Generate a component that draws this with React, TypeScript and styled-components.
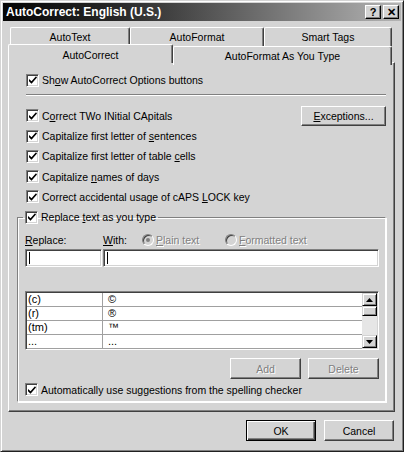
import React from "react";
import styled, { createGlobalStyle } from "styled-components";

const FACE = "#d4d4d4";
const SHADOW = "#808080";
const DARK = "#404040";

const GlobalStyle = createGlobalStyle`
  html, body { margin: 0; padding: 0; background: ${FACE}; }
  body {
    font-family: "Liberation Sans", Arial, sans-serif;
    font-size: 10.5px;
    color: #000;
  }
  * { box-sizing: border-box; }
`;

const Window = styled.div`
  width: 404px;
  height: 452px;
  background: ${FACE};
  border: 1px solid;
  border-color: ${FACE} #202020 #202020 ${FACE};
  box-shadow: inset 1px 1px 0 #fff, inset -1px -1px 0 ${SHADOW};
  padding: 2px;
  display: flex;
  flex-direction: column;
`;

const TitleBar = styled.div`
  height: 18px;
  display: flex;
  align-items: center;
  padding: 0 2px 0 3px;
  background: linear-gradient(to right, #050505 0%, #2a2a2a 30%, #b4b4b4 100%);
  color: #fff;
  font-weight: bold;
  font-size: 12px;
`;

const TitleText = styled.div`
  flex: 1;
`;

const TitleButton = styled.div`
  width: 16px;
  height: 14px;
  margin-left: 2px;
  background: ${FACE};
  border: 1px solid;
  border-color: #fff #000 #000 #fff;
  box-shadow: inset -1px -1px 0 ${SHADOW};
  color: #000;
  display: flex;
  align-items: center;
  justify-content: center;
  font-size: 11px;
  font-weight: bold;
  line-height: 1;
`;

const Body = styled.div`
  flex: 1;
  display: flex;
  flex-direction: column;
  padding: 6px 6px 0 5px;
`;

const TabStrip = styled.div`
  display: flex;
  flex-direction: column;
`;

const TabRow = styled.div<{ $back?: boolean }>`
  display: flex;
  height: ${(p) => (p.$back ? 19 : 16)}px;
  margin-left: ${(p) => (p.$back ? 2 : 0)}px;
  align-items: flex-start;
`;

const Tab = styled.div<{ $w: number; $selected?: boolean }>`
  width: ${(p) => p.$w}px;
  height: 19px;
  margin-top: ${(p) => (p.$selected ? -2 : 0)}px;
  background: ${FACE};
  border-top: 1px solid #fff;
  border-left: 1px solid #fff;
  border-right: 1px solid ${DARK};
  box-shadow: inset -1px 0 0 ${SHADOW};
  border-radius: 2px 2px 0 0;
  text-align: center;
  padding-top: ${(p) => (p.$selected ? 4 : 3)}px;
  position: relative;
  z-index: ${(p) => (p.$selected ? 2 : 0)};
`;

const Panel = styled.div`
  height: 350px;
  border: 1px solid;
  border-color: #fff ${DARK} ${DARK} #fff;
  box-shadow: inset -1px -1px 0 ${SHADOW};
  padding: 7px 8px 0 8px;
  display: flex;
  flex-direction: column;
`;

const Row = styled.div<{ $h?: number; $flush?: boolean }>`
  height: ${(p) => p.$h ?? 20.25}px;
  display: flex;
  align-items: center;
  padding-left: ${(p) => (p.$flush ? 0 : 9)}px;
`;

const Label = styled.span<{ $disabled?: boolean }>`
  white-space: nowrap;
  color: ${(p) => (p.$disabled ? SHADOW : "#000")};
  text-shadow: ${(p) => (p.$disabled ? "1px 1px 0 #fff" : "none")};
`;

const Box = styled.div`
  width: 13px;
  height: 13px;
  flex: none;
  margin-right: 3px;
  background: #fff;
  border: 1px solid;
  border-color: ${SHADOW} #fff #fff ${SHADOW};
  box-shadow: inset 1px 1px 0 ${DARK}, inset -1px -1px 0 ${FACE};
  display: flex;
  align-items: center;
  justify-content: center;
`;

const Separator = styled.div`
  margin: 4px 0 9px 9px;
  height: 2px;
  border-top: 1px solid ${SHADOW};
  border-bottom: 1px solid #fff;
`;

const Button = styled.div<{ $w: number; $h?: number; $default?: boolean; $disabled?: boolean }>`
  width: ${(p) => p.$w}px;
  height: ${(p) => p.$h ?? 20}px;
  flex: none;
  display: flex;
  align-items: center;
  justify-content: center;
  background: ${FACE};
  border: 1px solid;
  border-color: ${(p) => (p.$default ? "#000" : `#fff ${DARK} ${DARK} #fff`)};
  box-shadow: ${(p) =>
    p.$default
      ? `inset 1px 1px 0 #fff, inset -1px -1px 0 ${DARK}, inset -2px -2px 0 ${SHADOW}`
      : `inset -1px -1px 0 ${SHADOW}`};
  color: ${(p) => (p.$disabled ? SHADOW : "#000")};
  text-shadow: ${(p) => (p.$disabled ? "1px 1px 0 #fff" : "none")};
`;

const Spacer = styled.div`
  flex: 1;
`;

const Group = styled.fieldset`
  margin: 0;
  padding: 0 6px 1px 5px;
  border: 1px solid;
  border-color: ${SHADOW} #fff #fff ${SHADOW};
  box-shadow: 1px 1px 0 #fff, inset 1px 1px 0 #fff;
  min-width: 0;
`;

const Legend = styled.legend`
  padding: 0 2px;
  height: 20px;
  display: flex;
  align-items: center;
`;

const GroupInner = styled.div`
  padding-left: 2px;
  display: flex;
  flex-direction: column;
`;

const FieldLabels = styled.div`
  margin-top: 5px;
  height: 16px;
  display: grid;
  grid-template-columns: 78px 39px 83px 1fr;
  align-items: center;
`;

const RadioItem = styled.div`
  display: flex;
  align-items: center;
`;

const RadioCircle = styled.div<{ $on?: boolean }>`
  width: 12px;
  height: 12px;
  margin-right: 2px;
  border-radius: 50%;
  border: 1px solid;
  border-color: ${SHADOW} #fff #fff ${SHADOW};
  box-shadow: inset 1px 1px 0 ${DARK};
  background: ${FACE};
  display: flex;
  align-items: center;
  justify-content: center;
  &::after {
    content: "";
    width: 4px;
    height: 4px;
    border-radius: 50%;
    background: ${(p) => (p.$on ? SHADOW : "transparent")};
  }
`;

const InputRow = styled.div`
  margin-top: 1px;
  display: flex;
  gap: 1px;
`;

const TextInput = styled.div<{ $w?: number }>`
  height: 18px;
  ${(p) => (p.$w ? `width: ${p.$w}px;` : "flex: 1;")}
  background: #fff;
  border: 1px solid;
  border-color: ${SHADOW} #fff #fff ${SHADOW};
  box-shadow: inset 1px 1px 0 ${DARK}, inset -1px -1px 0 ${FACE};
  padding: 2px 0 0 3px;
`;

const Caret = styled.div`
  width: 1px;
  height: 12px;
  background: #000;
`;

const ListBox = styled.div`
  margin-top: 24px;
  height: 59px;
  background: #fff;
  border: 1px solid;
  border-color: ${SHADOW} #fff #fff ${SHADOW};
  box-shadow: inset 1px 1px 0 ${DARK}, inset -1px -1px 0 ${FACE};
  padding: 1px;
  display: flex;
  overflow: hidden;
`;

const ListRows = styled.div`
  flex: 1;
  display: flex;
  flex-direction: column;
`;

const ListRow = styled.div`
  height: 14px;
  flex: none;
  display: grid;
  grid-template-columns: 76px 1fr;
  border-bottom: 1px solid #a0a0a0;
  line-height: 13px;
  font-size: 11px;
`;

const Cell = styled.div<{ $first?: boolean }>`
  padding-left: ${(p) => (p.$first ? 1 : 5)}px;
  border-right: ${(p) => (p.$first ? "1px solid #a0a0a0" : "none")};
  white-space: nowrap;
`;

const ScrollBar = styled.div`
  width: 15px;
  flex: none;
  display: flex;
  flex-direction: column;
  background: #e6e6e6;
`;

const ScrollButton = styled.div<{ $h?: number }>`
  height: ${(p) => p.$h ?? 13}px;
  flex: none;
  background: ${FACE};
  border: 1px solid;
  border-color: ${FACE} #000 #000 ${FACE};
  box-shadow: inset 1px 1px 0 #fff, inset -1px -1px 0 ${SHADOW};
  display: flex;
  align-items: center;
  justify-content: center;
`;

const ButtonRow = styled.div`
  margin-top: 8px;
  display: flex;
  justify-content: flex-end;
  gap: 7px;
`;

const Footer = styled.div`
  margin-top: 8px;
  display: flex;
  justify-content: flex-end;
  gap: 8px;
  padding-right: 1px;
`;

const Check = () => (
  <svg width="8" height="8" viewBox="0 0 8 8">
    <polygon points="0,3 2.5,5.2 7,0.3 8,1.5 2.5,7.8 0,5.3" fill="#000" />
  </svg>
);

const Arrow = ({ down }: { down?: boolean }) => (
  <svg width="7" height="4" viewBox="0 0 7 4">
    <polygon points={down ? "0,0 7,0 3.5,4" : "0,4 7,4 3.5,0"} fill="#000" />
  </svg>
);

const CheckRow = ({ children, h }: { children: React.ReactNode; h?: number }) => (
  <Row $h={h}>
    <Box>
      <Check />
    </Box>
    <Label>{children}</Label>
  </Row>
);

const entries: [string, string][] = [
  ["(c)", "©"],
  ["(r)", "®"],
  ["(tm)", "™"],
  ["...", "..."],
];

export default function App() {
  return (
    <>
      <GlobalStyle />
      <Window>
        <TitleBar>
          <TitleText>AutoCorrect: English (U.S.)</TitleText>
          <TitleButton>?</TitleButton>
          <TitleButton>✕</TitleButton>
        </TitleBar>
        <Body>
          <TabStrip>
            <TabRow $back>
              <Tab $w={120}>AutoText</Tab>
              <Tab $w={134}>AutoFormat</Tab>
              <Tab $w={128}>Smart Tags</Tab>
            </TabRow>
            <TabRow>
              <Tab $w={165} $selected>
                AutoCorrect
              </Tab>
              <Tab $w={219}>AutoFormat As You Type</Tab>
            </TabRow>
          </TabStrip>
          <Panel>
            <CheckRow h={20}>
              Sh<u>o</u>w AutoCorrect Options buttons
            </CheckRow>
            <Separator />
            <Row $h={21}>
              <Box>
                <Check />
              </Box>
              <Label>
                C<u>o</u>rrect TWo INitial CApitals
              </Label>
              <Spacer />
              <Button $w={85}>
                <u>E</u>xceptions...
              </Button>
            </Row>
            <CheckRow>
              Capitalize first letter of <u>s</u>entences
            </CheckRow>
            <CheckRow>
              Capitalize first letter of table <u>c</u>ells
            </CheckRow>
            <CheckRow>
              Capitalize <u>n</u>ames of days
            </CheckRow>
            <CheckRow>
              Correct accidental usage of cAPS <u>L</u>OCK key
            </CheckRow>
            <Group>
              <Legend>
                <Box>
                  <Check />
                </Box>
                <Label>
                  Replace <u>t</u>ext as you type
                </Label>
              </Legend>
              <GroupInner>
                <FieldLabels>
                  <Label>
                    <u>R</u>eplace:
                  </Label>
                  <Label>
                    <u>W</u>ith:
                  </Label>
                  <RadioItem>
                    <RadioCircle $on />
                    <Label $disabled>
                      <u>P</u>lain text
                    </Label>
                  </RadioItem>
                  <RadioItem>
                    <RadioCircle />
                    <Label $disabled>
                      <u>F</u>ormatted text
                    </Label>
                  </RadioItem>
                </FieldLabels>
                <InputRow>
                  <TextInput $w={77}>
                    <Caret />
                  </TextInput>
                  <TextInput>
                    <Caret />
                  </TextInput>
                </InputRow>
                <ListBox>
                  <ListRows>
                    {entries.map(([from, to]) => (
                      <ListRow key={from}>
                        <Cell $first>{from}</Cell>
                        <Cell>{to}</Cell>
                      </ListRow>
                    ))}
                  </ListRows>
                  <ScrollBar>
                    <ScrollButton>
                      <Arrow />
                    </ScrollButton>
                    <ScrollButton $h={10} />
                    <Spacer />
                    <ScrollButton>
                      <Arrow down />
                    </ScrollButton>
                  </ScrollBar>
                </ListBox>
                <ButtonRow>
                  <Button $w={71} $h={21} $disabled>
                    Add
                  </Button>
                  <Button $w={71} $h={21} $disabled>
                    Delete
                  </Button>
                </ButtonRow>
                <Row $h={21} $flush>
                  <Box>
                    <Check />
                  </Box>
                  <Label>Automatically use suggestions from the spelling checker</Label>
                </Row>
              </GroupInner>
            </Group>
          </Panel>
          <Footer>
            <Button $w={70} $h={21} $default>
              OK
            </Button>
            <Button $w={70} $h={21}>
              Cancel
            </Button>
          </Footer>
        </Body>
      </Window>
    </>
  );
}
